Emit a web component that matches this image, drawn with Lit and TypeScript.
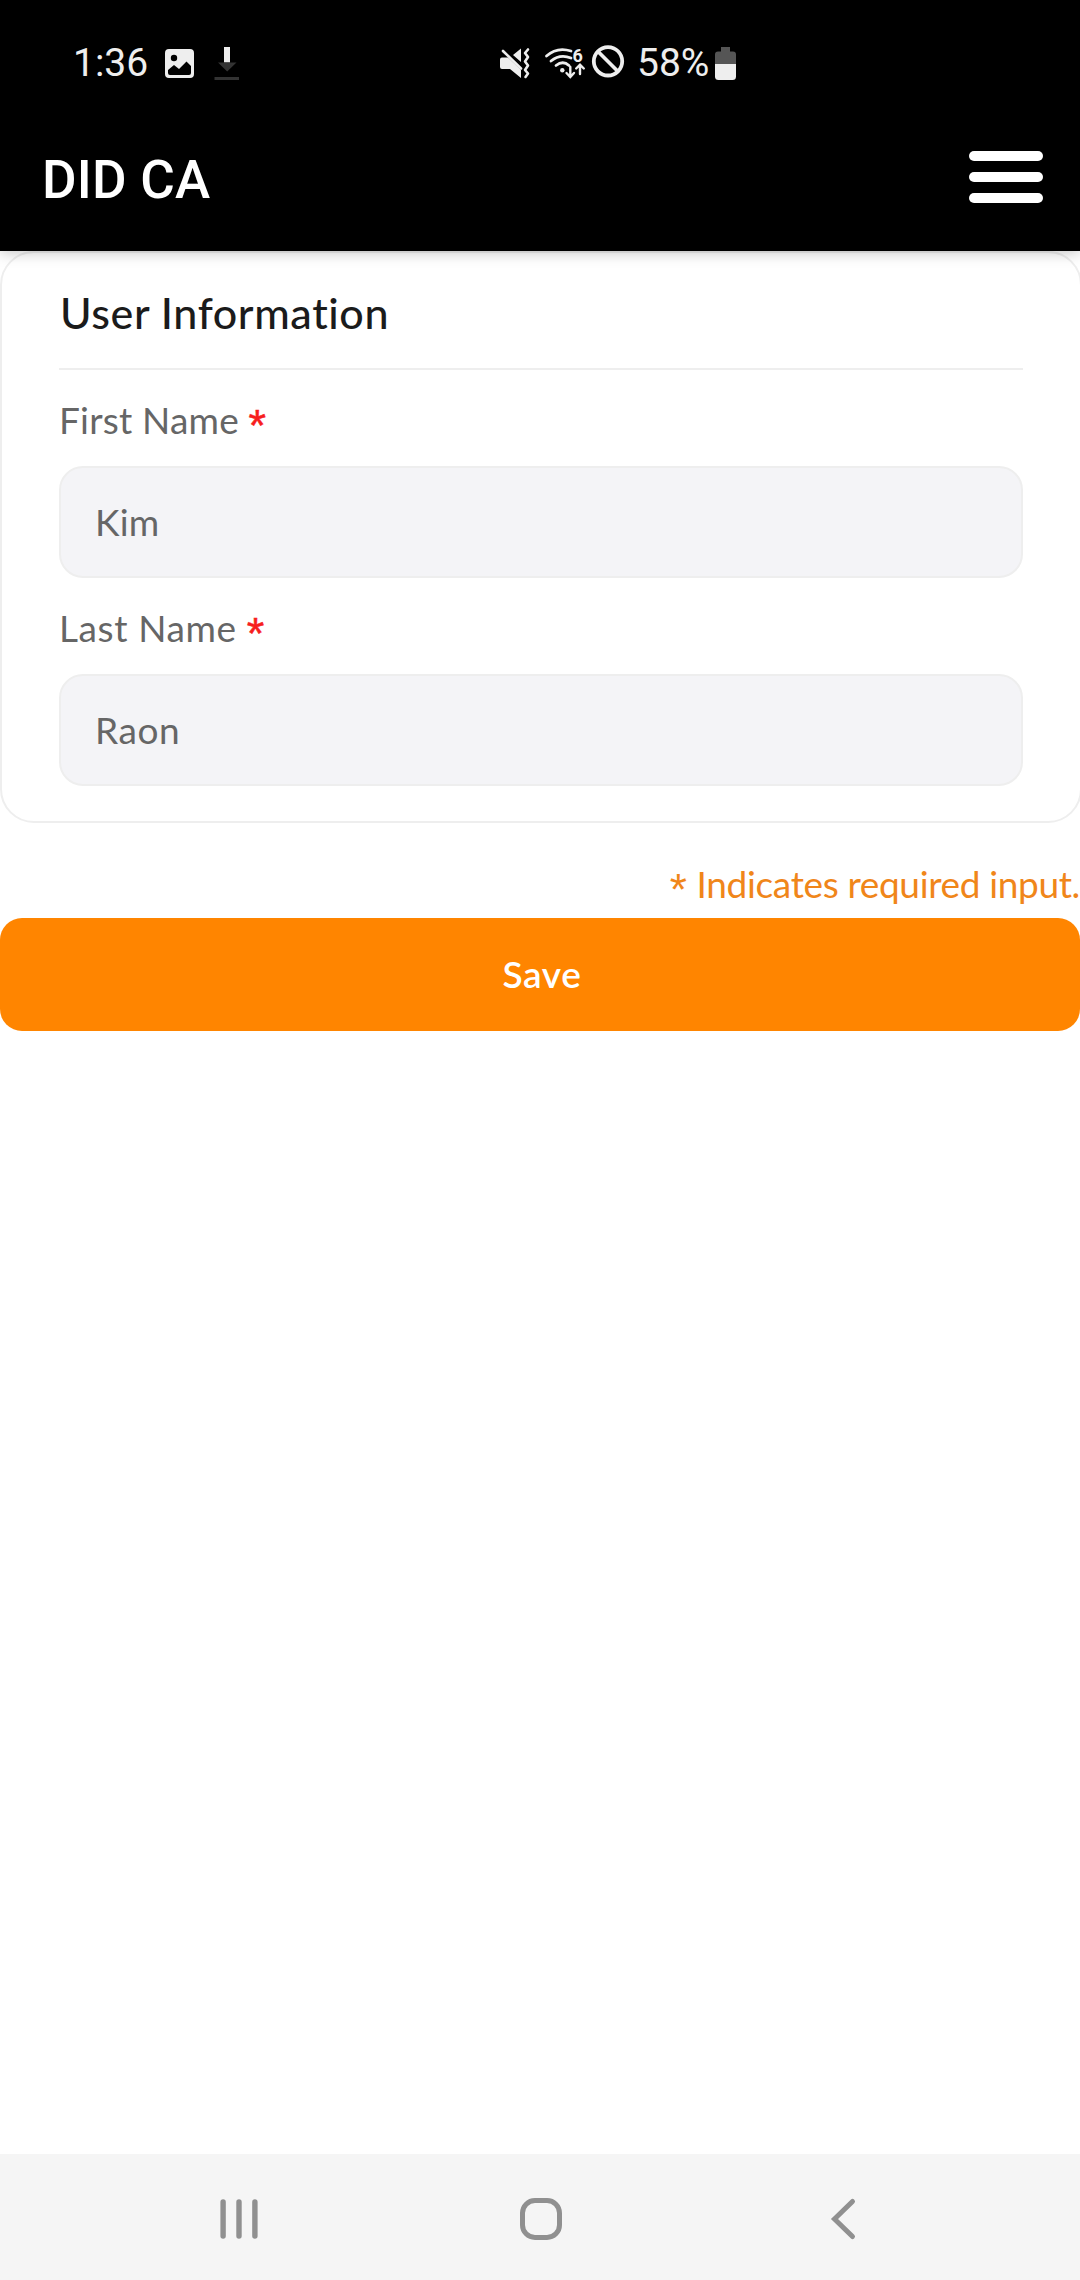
import { LitElement, html, css } from "lit";
import { customElement, property } from "lit/decorators.js";

@customElement("status-bar")
class StatusBar extends LitElement {
  static styles = css`
    :host { display: flex; height: 66px; padding: 30px 0 0 73px; background: #000; color: #eee;
      font: 400 39px/66px Roboto, sans-serif; }
    svg { display: block; flex: none; }
    .time { width: 87px; height: 66px; line-height: 67px; white-space: nowrap; }
    .level { width: 75px; line-height: 67px; white-space: nowrap; }
    .gap { width: 245px; }
    .mini { font: 700 18px Roboto, sans-serif; }
  `;
  render() {
    return html`
      <div class="time">1:36</div>
      <svg width="85" height="66" viewBox="160 30 85 66">
        <path fill="#eee" fill-rule="evenodd" d="M169 49H190Q194 49 194 53V74Q194 78 190 78H169Q165 78 165 74V53Q165 49 169 49ZM168 70V73Q168 75 170 75H189Q191 75 191 73V66L186.500 61.500L179 69L174 65Z"/>
        <circle cx="174" cy="58" r="3.200" fill="#000"/>
        <path fill="#eee" d="M224 47H230V62.500H224Z"/>
        <path fill="#333" d="M218 62.500H236.500L227.200 71.500ZM214.500 77H239V80H214.500Z"/>
      </svg>
      <div class="gap"></div>
      <svg width="147" height="66" viewBox="490 30 147 66">
        <path fill="#eee" d="M502 57.500H508L521 70V78L510 69H502Q500 69 500 67V59.500Q500 57.500 502 57.500ZM521 48.500V62L513 55Z"/>
        <path d="M503 51L521 68.500" stroke="#eee" stroke-width="2.600" stroke-linecap="round"/>
        <path d="M528 49.500L525 53L528 57L525 61.500L528 65.500L525 70L528 73.500L525.500 77" fill="none" stroke="#eee" stroke-width="2.600" stroke-linecap="round" stroke-linejoin="round"/>
        <g fill="none" stroke="#eee" stroke-width="2.800" stroke-linecap="round">
          <path d="M546.500 56Q557 46.500 571 51"/>
          <path d="M551 61Q560 53.500 571 58"/>
          <path d="M556 65.500Q563 60 569 65.500"/>
          <path d="M570.300 67V76M566.500 73L570.300 77L574 73M580 74V65M576.200 68.500L580 64.700L583.800 68.500" stroke-width="2.400"/>
        </g>
        <circle cx="562.300" cy="70.300" r="2.200" fill="#eee"/>
        <text class="mini" x="572.500" y="61.500" fill="#eee">6</text>
        <circle cx="608" cy="61.300" r="14.200" fill="none" stroke="#eee" stroke-width="3.800"/>
        <path d="M598 51.500L618 71.500" stroke="#eee" stroke-width="3.800"/>
      </svg>
      <div class="level">58%</div>
      <svg width="30" height="66" viewBox="712 30 30 66">
        <path fill="#555" d="M721 47H730V51.500H733Q736 51.500 736 54.500V65H715V54.500Q715 51.500 718 51.500H721Z"/>
        <path fill="#eee" d="M715 64H736V76.500Q736 80 732.500 80H718.500Q715 80 715 76.500Z"/>
      </svg>
    `;
  }
}

@customElement("title-bar")
class TitleBar extends LitElement {
  static styles = css`
    :host { display: flex; height: 155px; padding: 0 37px 0 42px; justify-content: space-between;
      background: #000; color: #fff; }
    .name { padding-top: 53px; font: 500 53px/62px Roboto, sans-serif; letter-spacing: 0.2px; white-space: nowrap; }
    .menu { display: flex; flex-direction: column; gap: 11px; padding-top: 55px; width: 74px; }
    .line { height: 10px; border-radius: 5px; background: #fff; }
  `;
  render() {
    return html`
      <div class="name">DID CA</div>
      <div class="menu"><div class="line"></div><div class="line"></div><div class="line"></div></div>
    `;
  }
}

@customElement("form-field")
class FormField extends LitElement {
  @property() label = "";
  @property() value = "";
  static styles = css`
    :host { display: block; font: 400 37px/46px Lato, sans-serif; color: #666; letter-spacing: 0.4px; }
    .label { height: 46px; white-space: nowrap; }
    .star { color: #f71e1e; font: 400 45px/0 "Liberation Sans", sans-serif; vertical-align: -7px;
      -webkit-text-stroke: 0.5px #f71e1e; }
    .box { box-sizing: border-box; height: 112px; margin-top: 23px; padding: 31px 34px; border: 2px solid #eee;
      border-radius: 24px; background: #f4f4f7; }
  `;
  render() {
    return html`
      <div class="label">${this.label} <span class="star">*</span></div>
      <div class="box">${this.value}</div>
    `;
  }
}

@customElement("nav-bar")
class NavBar extends LitElement {
  static styles = css`
    :host { display: block; height: 126px; background: #f5f5f5; }
    svg { display: block; }
  `;
  render() {
    return html`
      <svg width="1080" height="126" viewBox="0 2154 1080 126" fill="none" stroke="#909090" stroke-linecap="round" stroke-width="5.400">
        <path d="M223.100 2202V2236M239 2202V2236M254.900 2202V2236"/>
        <rect x="522.500" y="2200.500" width="37" height="37" rx="12.500" stroke-width="5"/>
        <path d="M852.500 2201.500L834.500 2219L852.500 2236.500" stroke-width="5"/>
      </svg>
    `;
  }
}

@customElement("app-root")
class AppRoot extends LitElement {
  static styles = css`
    :host { display: flex; flex-direction: column; width: 1080px; height: 2280px; overflow: hidden; background: #fff;
      font-family: Lato, sans-serif; }
    .top { position: relative; z-index: 1; box-shadow: 0 1px 14px rgba(0, 0, 0, 0.25); }
    .card { box-sizing: border-box; width: 1082px; height: 572px; padding: 32px 57px 0 57px; border: 2px solid #eee; border-radius: 34px; }
    .heading { height: 56px; padding: 0 0 27px 1px; border-bottom: 2px solid #eee;
      font: 500 43px/56px Lato, sans-serif; color: #1b1b1b; letter-spacing: 0.6px; white-space: nowrap; }
    .first { margin-top: 27px; letter-spacing: 0.2px; }
    .last { margin-top: 27px; letter-spacing: 0.6px; }
    .note { margin-top: 38px; height: 46px; text-align: right; font-size: 37px; line-height: 46px; color: #f0861a;
      white-space: nowrap; letter-spacing: -0.35px; }
    .star { font: 400 44px/0 "Liberation Sans", sans-serif; vertical-align: -7px; margin-right: 1px; }
    .save { display: block; box-sizing: border-box; width: 100%; height: 113px; margin: 11px 0 0; padding: 0 0 1px 4px; border: 0;
      border-radius: 22px; background: #ff8500; color: #fff; font: 600 37px/46px Lato, sans-serif; letter-spacing: 0.6px; flex: none; }
    .space { flex: 1; }
  `;
  render() {
    return html`
      <div class="top"><status-bar></status-bar><title-bar></title-bar></div>
      <div class="card">
        <div class="heading">User Information</div>
        <form-field class="first" label="First Name" value="Kim"></form-field>
        <form-field class="last" label="Last Name" value="Raon"></form-field>
      </div>
      <div class="note"><span class="star">*</span> Indicates required input.</div>
      <button class="save">Save</button>
      <div class="space"></div>
      <nav-bar></nav-bar>
    `;
  }
}
